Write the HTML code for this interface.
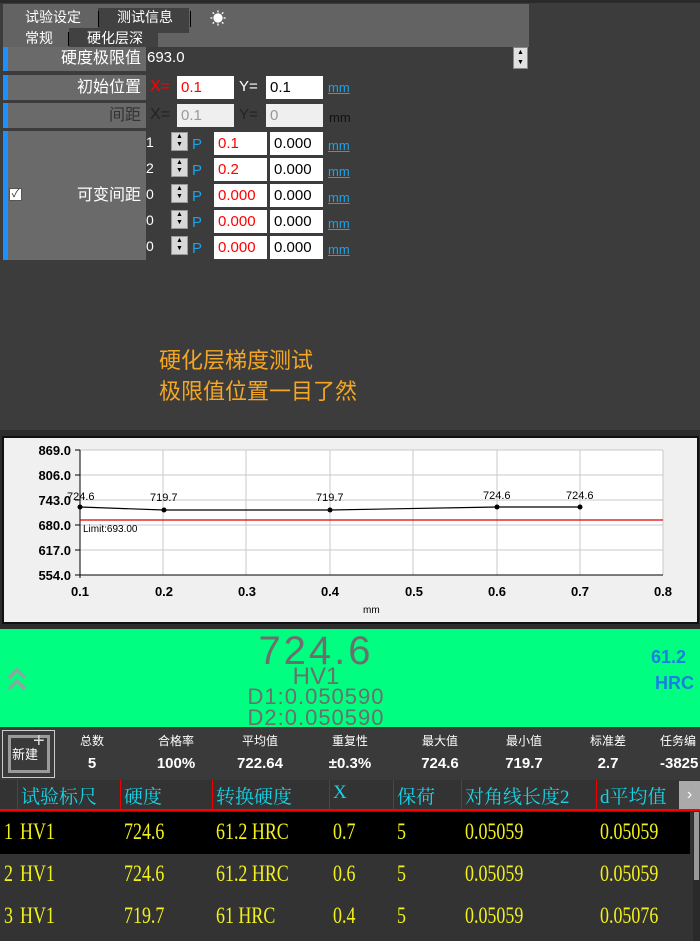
<!DOCTYPE html>
<html><head><meta charset="utf-8"><style>
*{margin:0;padding:0;box-sizing:border-box}
body{width:700px;height:941px;background:#3c3c3c;position:relative;overflow:hidden;font-family:"Liberation Sans","Noto Sans CJK SC",sans-serif;color:#fff}
.a{position:absolute}
.lbl{position:absolute;left:3px;width:143px;background:#6a6a6a;border-left:5px solid #1e8fff;text-align:right;padding-right:5px;font-size:16px;color:#fff}
.in{position:absolute;background:#fff;height:23px;font-size:15px;padding-left:4px;line-height:23px;color:#000}
.red{color:#f00}
.mm{position:absolute;color:#1aa3e8;font-size:13px;text-decoration:underline}
.sp{position:absolute;left:171px;width:17px;height:19px;background:#d8d8d8;border:1px solid #999;font-size:7px;color:#000;text-align:center;line-height:8px}
.n{position:absolute;left:146px;font-size:14px}
.P{position:absolute;left:192px;font-size:15px;color:#1aa3e8}
.st{position:absolute;top:732px;width:70px;text-align:center;font-size:12px;color:#fff}
.st b{display:block;font-size:15px;margin-top:6px}
.th{position:absolute;top:782px;font-size:19px;color:#17d4e8;font-family:"Liberation Serif","Noto Serif CJK SC",serif}
.row{position:absolute;left:0;width:690px;height:42px;font-family:"Liberation Serif","Noto Serif CJK SC",serif;color:#f2f21a;font-size:23px}
.row span{position:absolute;top:7px;transform:scaleX(0.78);transform-origin:left}
.g{font-family:"Liberation Sans Narrow","Liberation Sans",sans-serif;color:#6e6e6e;position:absolute;left:0;width:632px;text-align:center}
</style></head><body>
<div class="a" style="left:0;top:0;width:700px;height:3px;background:#2a2a2a"></div>
<div class="a" style="left:3px;top:4px;width:526px;height:43px;background:#636363"></div>
<div class="a" style="left:98px;top:8px;width:91px;height:25px;background:#414141"></div>
<div class="a" style="left:69px;top:28px;width:89px;height:19px;background:#414141"></div>
<div class="a" style="left:25px;top:7px;font-size:14px">试验设定</div>
<div class="a" style="left:98px;top:11px;width:1px;height:16px;background:#000"></div>
<div class="a" style="left:117px;top:7px;font-size:14px">测试信息</div>
<div class="a" style="left:190px;top:11px;width:1px;height:16px;background:#000"></div>
<div class="a" style="left:210px;top:5px;font-size:16px">☀</div>
<div class="a" style="left:25px;top:28px;font-size:14px">常规</div>
<div class="a" style="left:68px;top:32px;width:1px;height:14px;background:#000"></div>
<div class="a" style="left:87px;top:28px;font-size:14px">硬化层深</div>

<div class="lbl" style="top:47px;height:24px;line-height:24px">硬度极限值</div>
<div class="a" style="left:147px;top:49px;font-size:15px">693.0</div>
<div class="a" style="left:513px;top:47px;width:15px;height:22px;background:#e0e0e0;border:1px solid #888;font-size:7px;color:#000;text-align:center;line-height:10px">▲<br>▼</div>

<div class="lbl" style="top:75px;height:25px;line-height:25px">初始位置</div>
<div class="a red" style="left:150px;top:78px;font-size:16px">X=</div>
<div class="in red" style="left:177px;top:76px;width:57px">0.1</div>
<div class="a" style="left:239px;top:78px;font-size:15px">Y=</div>
<div class="in" style="left:266px;top:76px;width:57px">0.1</div>
<div class="mm" style="left:328px;top:80px">mm</div>

<div class="lbl" style="top:103px;height:25px;line-height:25px;color:#333">间距</div>
<div class="a" style="left:150px;top:106px;font-size:16px;color:#222">X=</div>
<div class="in" style="left:177px;top:104px;width:57px;background:#efefef;color:#999">0.1</div>
<div class="a" style="left:239px;top:106px;font-size:15px;color:#222">Y=</div>
<div class="in" style="left:266px;top:104px;width:57px;background:#efefef;color:#999">0</div>
<div class="a" style="left:329px;top:110px;font-size:13px;color:#111">mm</div>

<div class="lbl" style="top:131px;height:129px;line-height:129px">可变间距</div>
<div class="a" style="left:9px;top:188px;width:13px;height:13px;background:#fff;border:1px solid #555;color:#333;font-size:11px;line-height:11px;text-align:center">✓</div>

<div class="n" style="top:134px">1</div><div class="sp" style="top:132px">▲<br>▼</div><div class="P" style="top:136px">P</div>
<div class="in red" style="left:214px;top:132px;width:53px">0.1</div><div class="in" style="left:270px;top:132px;width:53px">0.000</div><div class="mm" style="left:328px;top:138px">mm</div>
<div class="n" style="top:160px">2</div><div class="sp" style="top:158px">▲<br>▼</div><div class="P" style="top:162px">P</div>
<div class="in red" style="left:214px;top:158px;width:53px">0.2</div><div class="in" style="left:270px;top:158px;width:53px">0.000</div><div class="mm" style="left:328px;top:164px">mm</div>
<div class="n" style="top:186px">0</div><div class="sp" style="top:184px">▲<br>▼</div><div class="P" style="top:188px">P</div>
<div class="in red" style="left:214px;top:184px;width:53px">0.000</div><div class="in" style="left:270px;top:184px;width:53px">0.000</div><div class="mm" style="left:328px;top:190px">mm</div>
<div class="n" style="top:212px">0</div><div class="sp" style="top:210px">▲<br>▼</div><div class="P" style="top:214px">P</div>
<div class="in red" style="left:214px;top:210px;width:53px">0.000</div><div class="in" style="left:270px;top:210px;width:53px">0.000</div><div class="mm" style="left:328px;top:216px">mm</div>
<div class="n" style="top:238px">0</div><div class="sp" style="top:236px">▲<br>▼</div><div class="P" style="top:240px">P</div>
<div class="in red" style="left:214px;top:236px;width:53px">0.000</div><div class="in" style="left:270px;top:236px;width:53px">0.000</div><div class="mm" style="left:328px;top:242px">mm</div>

<div class="a" style="left:159px;top:345px;font-size:22px;color:#f5a623;line-height:31px">硬化层梯度测试<br>极限值位置一目了然</div>

<div class="a" style="left:0;top:430px;width:700px;height:199px;background:#2c2c2c"></div>
<svg class="a" style="left:2px;top:436px" width="697" height="188" viewBox="2 436 697 188">
<rect x="3" y="437" width="695" height="186" fill="#f0f0f0" stroke="#111" stroke-width="2"/>
<rect x="80" y="450" width="583" height="125" fill="#fff"/>
<g stroke="#c8c8c8" stroke-width="1">
<line x1="80" y1="475" x2="663" y2="475"/><line x1="80" y1="500" x2="663" y2="500"/><line x1="80" y1="525" x2="663" y2="525"/><line x1="80" y1="550" x2="663" y2="550"/><line x1="80" y1="450" x2="663" y2="450"/>
<line x1="163" y1="450" x2="163" y2="575"/><line x1="246" y1="450" x2="246" y2="575"/><line x1="330" y1="450" x2="330" y2="575"/><line x1="413" y1="450" x2="413" y2="575"/><line x1="497" y1="450" x2="497" y2="575"/><line x1="580" y1="450" x2="580" y2="575"/><line x1="663" y1="450" x2="663" y2="575"/>
</g>
<g stroke="#000"><line x1="80" y1="450" x2="80" y2="578"/><line x1="80" y1="575" x2="663" y2="575"/>
<line x1="75" y1="450" x2="80" y2="450"/><line x1="75" y1="475" x2="80" y2="475"/><line x1="75" y1="500" x2="80" y2="500"/><line x1="75" y1="525" x2="80" y2="525"/><line x1="75" y1="550" x2="80" y2="550"/><line x1="75" y1="575" x2="80" y2="575"/></g>
<line x1="80" y1="520" x2="663" y2="520" stroke="#d00" stroke-width="1.2"/>
<polyline points="80,507 164,510 330,510 497,507 580,507" fill="none" stroke="#000" stroke-width="1.2"/>
<g fill="#000"><circle cx="80" cy="507" r="2.5"/><circle cx="164" cy="510" r="2.5"/><circle cx="330" cy="510" r="2.5"/><circle cx="497" cy="507" r="2.5"/><circle cx="580" cy="507" r="2.5"/></g>
<g font-family="Liberation Sans" font-size="11" fill="#000">
<text x="67" y="500">724.6</text><text x="150" y="501">719.7</text><text x="316" y="501">719.7</text><text x="483" y="499">724.6</text><text x="566" y="499">724.6</text>
<text x="83" y="532" font-size="10">Limit:693.00</text>
<text x="363" y="613" font-size="10">mm</text>
</g>
<g font-family="Liberation Sans" font-size="13" font-weight="bold" fill="#000" text-anchor="end">
<text x="71" y="455">869.0</text><text x="71" y="480">806.0</text><text x="71" y="505">743.0</text><text x="71" y="530">680.0</text><text x="71" y="555">617.0</text><text x="71" y="580">554.0</text></g>
<g font-family="Liberation Sans" font-size="13" font-weight="bold" fill="#000" text-anchor="middle">
<text x="80" y="596">0.1</text><text x="164" y="596">0.2</text><text x="247" y="596">0.3</text><text x="330" y="596">0.4</text><text x="414" y="596">0.5</text><text x="497" y="596">0.6</text><text x="580" y="596">0.7</text><text x="663" y="596">0.8</text></g>
</svg>

<div class="a" style="left:0;top:629px;width:700px;height:98px;background:#00ff80"></div>
<div class="g" style="top:631px;font-size:40px;line-height:40px;letter-spacing:3px">724.6</div>
<div class="g" style="top:665px;font-size:24px;line-height:24px">HV1</div>
<div class="g" style="top:686px;font-size:22px;line-height:21px;letter-spacing:1px">D1:0.050590<br>D2:0.050590</div>
<svg class="a" style="left:7px;top:667px" width="20" height="26" viewBox="0 0 20 26"><path d="M2 11 L10 3 L18 11 M2 22 L10 14 L18 22" fill="none" stroke="#8aa6a0" stroke-width="3.5"/></svg>
<div class="a" style="left:651px;top:647px;color:#1a7fe0;font-size:18px;font-weight:bold">61.2</div>
<div class="a" style="left:655px;top:673px;color:#1a7fe0;font-size:18px;font-weight:bold">HRC</div>

<div class="a" style="left:0;top:727px;width:700px;height:53px;background:#3a3a3a"></div>
<div class="a" style="left:2px;top:730px;width:53px;height:48px;border:1px solid #ccc"></div>
<div class="a" style="left:8px;top:735px;width:42px;height:38px;border:3px solid #9a9a9a"></div>
<div class="a" style="left:12px;top:744px;font-size:13px">新建</div>
<div class="a" style="left:33px;top:730px;font-size:20px;color:#ddd">+</div>
<div class="st" style="left:57px">总数<b>5</b></div>
<div class="st" style="left:141px">合格率<b>100%</b></div>
<div class="st" style="left:225px">平均值<b>722.64</b></div>
<div class="st" style="left:315px">重复性<b>±0.3%</b></div>
<div class="st" style="left:405px">最大值<b>724.6</b></div>
<div class="st" style="left:489px">最小值<b>719.7</b></div>
<div class="st" style="left:573px">标准差<b>2.7</b></div>
<div class="st" style="left:660px;text-align:left">任务编<b>-3825</b></div>

<div class="a" style="left:0;top:780px;width:700px;height:30px;background:#333"></div>
<div class="a" style="left:0;top:809px;width:700px;height:2px;background:#f00"></div>
<div class="a" style="left:17px;top:780px;width:1px;height:29px;background:#e00"></div>
<div class="a" style="left:120px;top:780px;width:1px;height:29px;background:#e00"></div>
<div class="a" style="left:212px;top:780px;width:1px;height:29px;background:#e00"></div>
<div class="a" style="left:329px;top:780px;width:1px;height:29px;background:#e00"></div>
<div class="a" style="left:393px;top:780px;width:1px;height:29px;background:#e00"></div>
<div class="a" style="left:461px;top:780px;width:1px;height:29px;background:#e00"></div>
<div class="a" style="left:596px;top:780px;width:1px;height:29px;background:#e00"></div>
<div class="th" style="left:21px">试验标尺</div>
<div class="th" style="left:124px">硬度</div>
<div class="th" style="left:216px">转换硬度</div>
<div class="th" style="left:333px">X</div>
<div class="th" style="left:397px">保荷</div>
<div class="th" style="left:465px">对角线长度2</div>
<div class="th" style="left:600px">d平均值</div>
<div class="a" style="left:679px;top:781px;width:21px;height:28px;background:#aaa;color:#fff;text-align:center;line-height:28px;font-size:16px">›</div>
<div class="a" style="left:693px;top:811px;width:7px;height:130px;background:#2a2a2a"></div>
<div class="a" style="left:694px;top:812px;width:5px;height:68px;background:#999"></div>

<div class="a" style="left:0;top:811px;width:693px;height:130px;background:#333"></div>
<div class="row" style="top:812px;background:#000"><span style="left:4px">1</span><span style="left:20px">HV1</span><span style="left:124px">724.6</span><span style="left:216px">61.2 HRC</span><span style="left:333px">0.7</span><span style="left:397px">5</span><span style="left:465px">0.05059</span><span style="left:600px">0.05059</span></div>
<div class="row" style="top:854px"><span style="left:4px">2</span><span style="left:20px">HV1</span><span style="left:124px">724.6</span><span style="left:216px">61.2 HRC</span><span style="left:333px">0.6</span><span style="left:397px">5</span><span style="left:465px">0.05059</span><span style="left:600px">0.05059</span></div>
<div class="row" style="top:896px"><span style="left:4px">3</span><span style="left:20px">HV1</span><span style="left:124px">719.7</span><span style="left:216px">61 HRC</span><span style="left:333px">0.4</span><span style="left:397px">5</span><span style="left:465px">0.05059</span><span style="left:600px">0.05076</span></div>
</body></html>
